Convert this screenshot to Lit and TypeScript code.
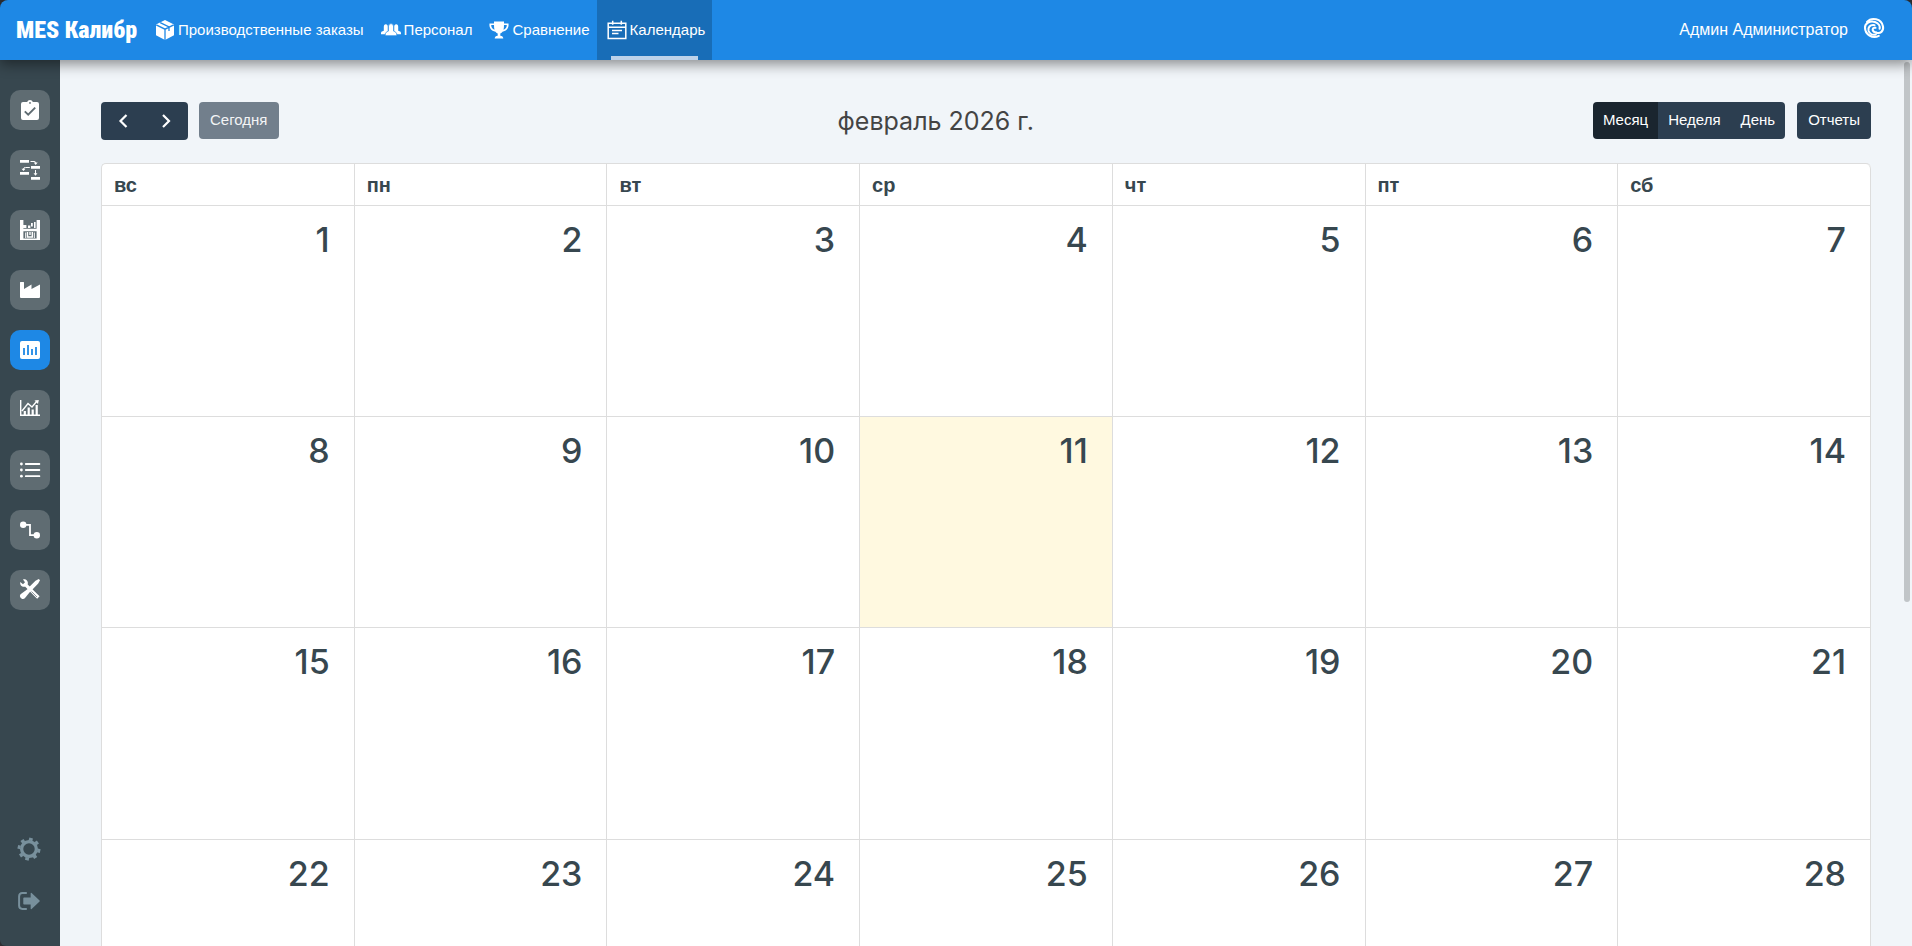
import { LitElement, html, css, svg, SVGTemplateResult } from "lit";
import { customElement, property, state } from "lit/decorators.js";
import { classMap } from "lit/directives/class-map.js";

const icons: Record<string, SVGTemplateResult> = {
  box: svg`<path d="M10 0 19 4.4V15.200L10 20 1 15.200V4.400Z"/><path d="M1.200 4.800 10 9.200 18.800 4.800M10 9.200V20M5.200 2.600 14 7V11" fill="none" stroke="var(--cut)" stroke-width="1.300"/>`,
  people: svg`<path d="M4.800 4.200q2 0 2 2.800v4.200l1.800.7v2.300H0v-1.200c0-1.300 1-1.600 2.800-2.200V7q0-2.800 2-2.800Z"/><path d="M15.200 4.200q2 0 2 2.800v3.800c1.800.6 2.800.9 2.800 2.200v1.200h-8.600v-2.300l1.800-.7V7q0-2.800 2-2.800Z"/><path d="M10 3.600q2.600 0 2.600 3.200v4.300c2 .9 3.100 1.500 3.100 3v1.600H4.300v-1.600c0-1.500 1.100-2.100 3.100-3V6.800q0-3.200 2.600-3.200Z" stroke="var(--cut)" stroke-width=".7"/>`,
  trophy: svg`<path d="M5 1.500h10v2h4.500c.6 4.500-1.800 7.300-6 8.200-.8 1-1.700 1.500-2.200 1.800v2.200c1.800.2 3 1 3 2.800H5.700c0-1.800 1.200-2.600 3-2.800v-2.200c-.5-.3-1.400-.8-2.200-1.800C2.300 10.800-.1 8 .5 3.500H5ZM2.200 5c.1 2.500 1.100 4 3.300 4.800C5.100 8.300 5 6.700 5 5Zm15.600 0H15c0 1.700-.1 3.300-.5 4.800 2.200-.8 3.200-2.300 3.300-4.800Z" fill-rule="evenodd"/>`,
  calendar: svg`<path d="M1.200 3.200h17.600v15.200H1.200ZM1 7.200h18M5.700.8v4M14.300.8v4M5 10.400h10M5 13.400h6.500" fill="none" stroke="currentColor" stroke-width="1.500"/>`,
  swirl: svg`<g fill="none" stroke="currentColor" stroke-width="2.100" stroke-linecap="round"><path d="M3 4C7.500-1.200 17.500.6 19 8.500c.8 4.800-2.800 7.400-6.400 6.200"/><path d="M1 9.500C.8 5.500 6 2.200 11 4c4 1.500 5.200 4.600 4.600 6.800"/><path d="M1 9.500C1 16.500 8.500 21 14.800 17.900"/><path d="M10.500 7.200C6 6.400 3.600 9.700 4.600 13c1 2.800 4.200 4.300 7.200 3.500"/><path d="M11.500 9.800c-2-.4-3.200 1-2.700 2.600.4 1.200 1.800 2 3.800 2.300"/></g>`,
  task: svg`<path d="M3 2h4.200C7.600.8 8.700 0 10 0s2.400.8 2.800 2H17q2 0 2 2v14q0 2-2 2H3q-2 0-2-2V4q0-2 2-2Z"/><circle cx="10" cy="2.900" r=".9" fill="var(--cut)"/><path d="m4.800 11.300 3.400 3.400 7-7" fill="none" stroke="var(--cut)" stroke-width="1.900"/>`,
  gantt: svg`<path d="M0 0h9v2.800H0ZM11 6h9v2.800h-9ZM0 12h9v2.800H0ZM11 17h9v2.800h-9Z"/><path d="M10.500 1.500H14q1.700 0 1.700 1.300M9.800 7.500H5.500q-2 0-2 1.500M15.500 10v4" fill="none" stroke="currentColor" stroke-width="1"/><path d="M13.700 2.600h4L15.700 4.900ZM1.500 8.700h4l-2 2.300ZM13.500 13.200h4l-2 2.500Z"/>`,
  warehouse: svg`<path d="M0 0h3.400v20H0ZM16.600 0H20v20h-3.400ZM3.400 8.800h13.200v2.400H3.400ZM3.400 18.600h13.200V20H3.400ZM3.400 5h3v3h-3ZM8 5.500h2.400V8H8ZM11 3h1.800v3.500H11ZM14 2h1.600v6H14Z"/><path d="M5.700 12.500V18M14.300 12.500V18" stroke="currentColor" stroke-width="1"/><path d="M7.500 12v5h4.800v-5M10 12v3" fill="none" stroke="currentColor" stroke-width="1.400"/>`,
  factory: svg`<path d="M0 2.500q0-.5.500-.5h3q.5 0 .5.500V9l7.500-4.500V9L20 4.500V17q0 1-1 1H1q-1 0-1-1Z"/>`,
  bars: svg`<path d="M2 1h16q2 0 2 2v14q0 2-2 2H2q-2 0-2-2V3q0-2 2-2Z"/><path d="M4 8v7M8 5v10M12 9v6M16 7v8" stroke="var(--cut)" stroke-width="1.800"/>`,
  chart: svg`<path d="M.7 0v15.300H20M2 11l6-7.500L12 7l5-6" fill="none" stroke="currentColor" stroke-width="1.400"/><path d="M14.500.6 18.800 0 18 4Z"/><path d="M4.800 11v5M8.700 7.500V16M12.700 9.500V16M16.700 5v11" stroke="currentColor" stroke-width="2.200"/>`,
  list: svg`<path d="M5.800 4h13.600M5.800 10h13.600M5.800 16.200h13.600" stroke="currentColor" stroke-width="1.800" stroke-linecap="round"/><circle cx="1.400" cy="4" r="1.400"/><circle cx="1.400" cy="10" r="1.400"/><circle cx="1.400" cy="16.200" r="1.400"/>`,
  route: svg`<circle cx="3.200" cy="4.800" r="3.200"/><circle cx="16.800" cy="15.200" r="3.200"/><path d="M4 4.800h6v10.400h6" fill="none" stroke="currentColor" stroke-width="1.800"/>`,
  tools: svg`<g transform="translate(0 -1)"><path d="m7.200 5 12.400 12.200-2.500 2.500L5 7.400"/><path d="M3 .4C5.800-.2 8.700 2 7.700 5.300L5.300 7.700C2 8.500-.4 6 .3 3L3 5.200 5 3.200ZM15.500 1.800 18.800 0 20 1.200 18.200 4.600 11 12 8.200 9Z"/><path d="m8 9.800 2.500 2.500-5.700 7c-2.500 2.500-6.500-1.700-4.200-4Z"/><path d="m11.500 12.500 5.500 5.500m-3.300-7.200 4.500 4.500" stroke="var(--cut)" stroke-width=".7"/></g>`,
  gear: svg`<circle cx="10" cy="10" r="6.700" fill="none" stroke="currentColor" stroke-width="3"/><path d="M11.300 2.500 12 0M15.800 5.200l2.300-1.600M17.600 11.300l2.600.6M14.600 15.900l1.500 2.300M8.600 17.600l-.6 2.600M4.100 14.800l-2.300 1.500M2.300 8.600-.2 8M5.200 4.100 3.600 1.800" fill="none" stroke="currentColor" stroke-width="3.400"/>`,
  exit: svg`<path d="M8 2.800H4Q1 2.800 1 5.800v8.400q0 3 3 3h4" fill="none" stroke="currentColor" stroke-width="1.800"/><path d="M5.500 6.800h6V3.200q0-1 .9-.4L19.600 9.500q.5.500 0 1l-7.200 6.700q-.9.600-.9-.4v-3.600h-6q-.7 0-.7-.7v-5q0-.7.700-.7Z"/>`,
  left: svg`<path d="m13.500 4-6 6 6 6" fill="none" stroke="currentColor" stroke-width="2.200"/>`,
  right: svg`<path d="m6 4 6 6-6 6" fill="none" stroke="currentColor" stroke-width="2.200"/>`,
};

@customElement("ui-icon")
class UiIcon extends LitElement {
  @property() name = "";
  static styles = css`
    :host { display: inline-flex; width: 20px; height: 20px; flex: none; }
    .glyph { width: 100%; height: 100%; overflow: visible; fill: currentColor; }
  `;
  render() {
    return html`<svg class="glyph" viewBox="0 0 20 20" aria-hidden="true">${icons[this.name]}</svg>`;
  }
}

@customElement("month-grid")
class MonthGrid extends LitElement {
  @property({ type: Number }) today = 11;
  static styles = css`
    :host { display: block; }
    .grid {
      width: 100%; aspect-ratio: 1.35; table-layout: fixed; box-sizing: border-box;
      border-collapse: separate; border-spacing: 0; background: #fff;
      border: 1px solid #ddd; border-width: 1px 0 0 1px; border-radius: 5px;
      color: #37474f;
    }
    .name, .day { border: 1px solid #ddd; border-width: 0 1px 1px 0; }
    .name {
      box-sizing: content-box; padding: 1px 12px 0; text-align: left;
      font: 700 20px/40px "Liberation Sans", Arial, sans-serif;
    }
    .name:last-child { border-top-right-radius: 5px; }
    .day { padding: 13px 24px 0; vertical-align: top; text-align: right; }
    .num { font: 500 34px/42px Inter, sans-serif; color: inherit; text-decoration: none; }
    .today { background: #fff9e0; }
    .other .num { opacity: .3; }
  `;
  render() {
    const names = ["вс", "пн", "вт", "ср", "чт", "пт", "сб"];
    return html`<table class="grid">
      <thead><tr>${names.map((n) => html`<th class="name" scope="col">${n}</th>`)}</tr></thead>
      <tbody>
        ${[0, 1, 2, 3, 4, 5].map((w) => html`<tr>
          ${names.map((_, d) => {
            const n = w * 7 + d + 1;
            const other = n > 28;
            return html`<td class=${classMap({ day: true, today: n === this.today, other })}>
              <a class="num" href="#">${other ? n - 28 : n}</a></td>`;
          })}
        </tr>`)}
      </tbody>
    </table>`;
  }
}

@customElement("app-root")
class AppRoot extends LitElement {
  @state() view = "Месяц";
  static styles = css`
    :host {
      display: flex; flex-direction: column; height: 100vh; overflow: hidden;
      background: #2e2f33; font: 16px/24px "Liberation Sans", Arial, sans-serif;
    }
    .top {
      display: flex; flex: none; height: 60px; z-index: 1; box-sizing: border-box;
      padding: 0 28px 0 16px; background: #1e88e5; --cut: #1e88e5; color: #fff;
      border-radius: 8px 8px 0 0; box-shadow: 0 4px 14px rgba(0, 0, 0, .45);
    }
    .logo {
      align-self: center; width: 129px; white-space: nowrap; color: #fff; text-decoration: none;
      font: 900 24px/28px Impact, "Roboto Condensed", Roboto, sans-serif;
    }
    .menu { display: flex; }
    .item {
      display: flex; align-items: center; gap: 3px; padding: 0 7px 0 10px;
      color: #fff; text-decoration: none; font-size: 15px; position: relative; white-space: nowrap;
    }
    .item.on { background: #186db7; --cut: #186db7; }
    .item.on::after {
      content: ""; position: absolute; left: 14px; right: 14px; bottom: 0; height: 4px; background: #bcd2ea;
    }
    .user { display: flex; align-items: center; gap: 16px; margin-left: auto; }
    .who { display: flex; color: inherit; background: none; border: 0; padding: 0 0 4px; }
    .body { display: flex; flex: 1; min-height: 0; }
    .side {
      display: flex; flex-direction: column; align-items: center; flex: none; width: 60px;
      box-sizing: border-box; padding: 30px 0 34px; gap: 20px; background: #37474f;
      border-bottom-left-radius: 6px;
    }
    .tool {
      display: flex; align-items: center; justify-content: center; width: 40px; height: 40px;
      border-radius: 10px; background: #5f6c72; --cut: #5f6c72; color: #fff;
    }
    .tool.on { background: #1e88e5; --cut: #1e88e5; }
    .foot { display: flex; flex-direction: column; gap: 30px; margin-top: auto; padding-right: 2px; }
    .mini { display: flex; color: #78909c; }
    .mini ui-icon { width: 22px; height: 22px; }
    .stage { flex: 1; min-width: 0; position: relative; display: flex; background: #f1f5f9; }
    .scroll { flex: 1; overflow: auto; scrollbar-width: none; padding: 42px 41px 40px; }
    .thumb { position: absolute; top: 2px; right: 2px; width: 6px; height: 61%; border-radius: 3px; background: #c1c5c8; }
    .bar { display: flex; justify-content: space-between; align-items: start; margin-bottom: 23px; }
    .set { display: flex; gap: 11px; align-items: flex-start; }
    .end { gap: 12px; }
    .group { display: flex; border-radius: 4px; overflow: hidden; }
    .btn {
      height: 37px; padding: 0 11px 2px; border: 0; border-radius: 4px; background: #2c3e50; color: #fff;
      font: 15px/24px "Liberation Sans", Arial, sans-serif; cursor: pointer;
    }
    .group .btn { border-radius: 0; padding: 0 10px 2px; }
    .btn.on { background: #1a252f; }
    .group .nav { display: flex; align-items: center; height: 38px; padding: 0 12px; }
    .group .nav + .nav { padding-right: 11px; }
    .btn.off { background: #727f8c; color: #f3f4f5; }
    .title { margin: 0; font: 400 25px/38px Inter, sans-serif; color: #444; }
  `;
  render() {
    const menu = [["box", "Производственные заказы"], ["people", "Персонал"], ["trophy", "Сравнение"], ["calendar", "Календарь"]];
    const tools = [["task", "Задания"], ["gantt", "План"], ["warehouse", "Склад"], ["factory", "Производство"],
      ["bars", "Показатели"], ["chart", "Аналитика"], ["list", "Списки"], ["route", "Маршруты"], ["tools", "Оснастка"]];
    return html`
      <header class="top">
        <a class="logo" href="#">MES Калибр</a>
        <nav class="menu">${menu.map(([i, t]) => html`
          <a class=${classMap({ item: true, on: i === "calendar" })} href="#"><ui-icon name=${i}></ui-icon>${t}</a>`)}
        </nav>
        <div class="user"><span>Админ Администратор</span>
          <button class="who" aria-label="Профиль"><ui-icon name="swirl"></ui-icon></button></div>
      </header>
      <div class="body">
        <aside class="side">
          ${tools.map(([i, t]) => html`<a class=${classMap({ tool: true, on: i === "bars" })} href="#" aria-label=${t}><ui-icon name=${i}></ui-icon></a>`)}
          <div class="foot">
            <a class="mini" href="#" aria-label="Настройки"><ui-icon name="gear"></ui-icon></a>
            <a class="mini" href="#" aria-label="Выход"><ui-icon name="exit"></ui-icon></a>
          </div>
        </aside>
        <main class="stage">
          <div class="scroll">
            <div class="bar">
              <div class="set">
                <div class="group">
                  <button class="btn nav" aria-label="Назад"><ui-icon name="left"></ui-icon></button>
                  <button class="btn nav" aria-label="Вперёд"><ui-icon name="right"></ui-icon></button>
                </div>
                <button class="btn off">Сегодня</button>
              </div>
              <h2 class="title">февраль 2026 г.</h2>
              <div class="set end">
                <div class="group">${["Месяц", "Неделя", "День"].map((v) => html`
                  <button class=${classMap({ btn: true, on: v === this.view })} @click=${() => (this.view = v)}>${v}</button>`)}
                </div>
                <button class="btn">Отчеты</button>
              </div>
            </div>
            <month-grid></month-grid>
          </div>
          <div class="thumb"></div>
        </main>
      </div>`;
  }
}
